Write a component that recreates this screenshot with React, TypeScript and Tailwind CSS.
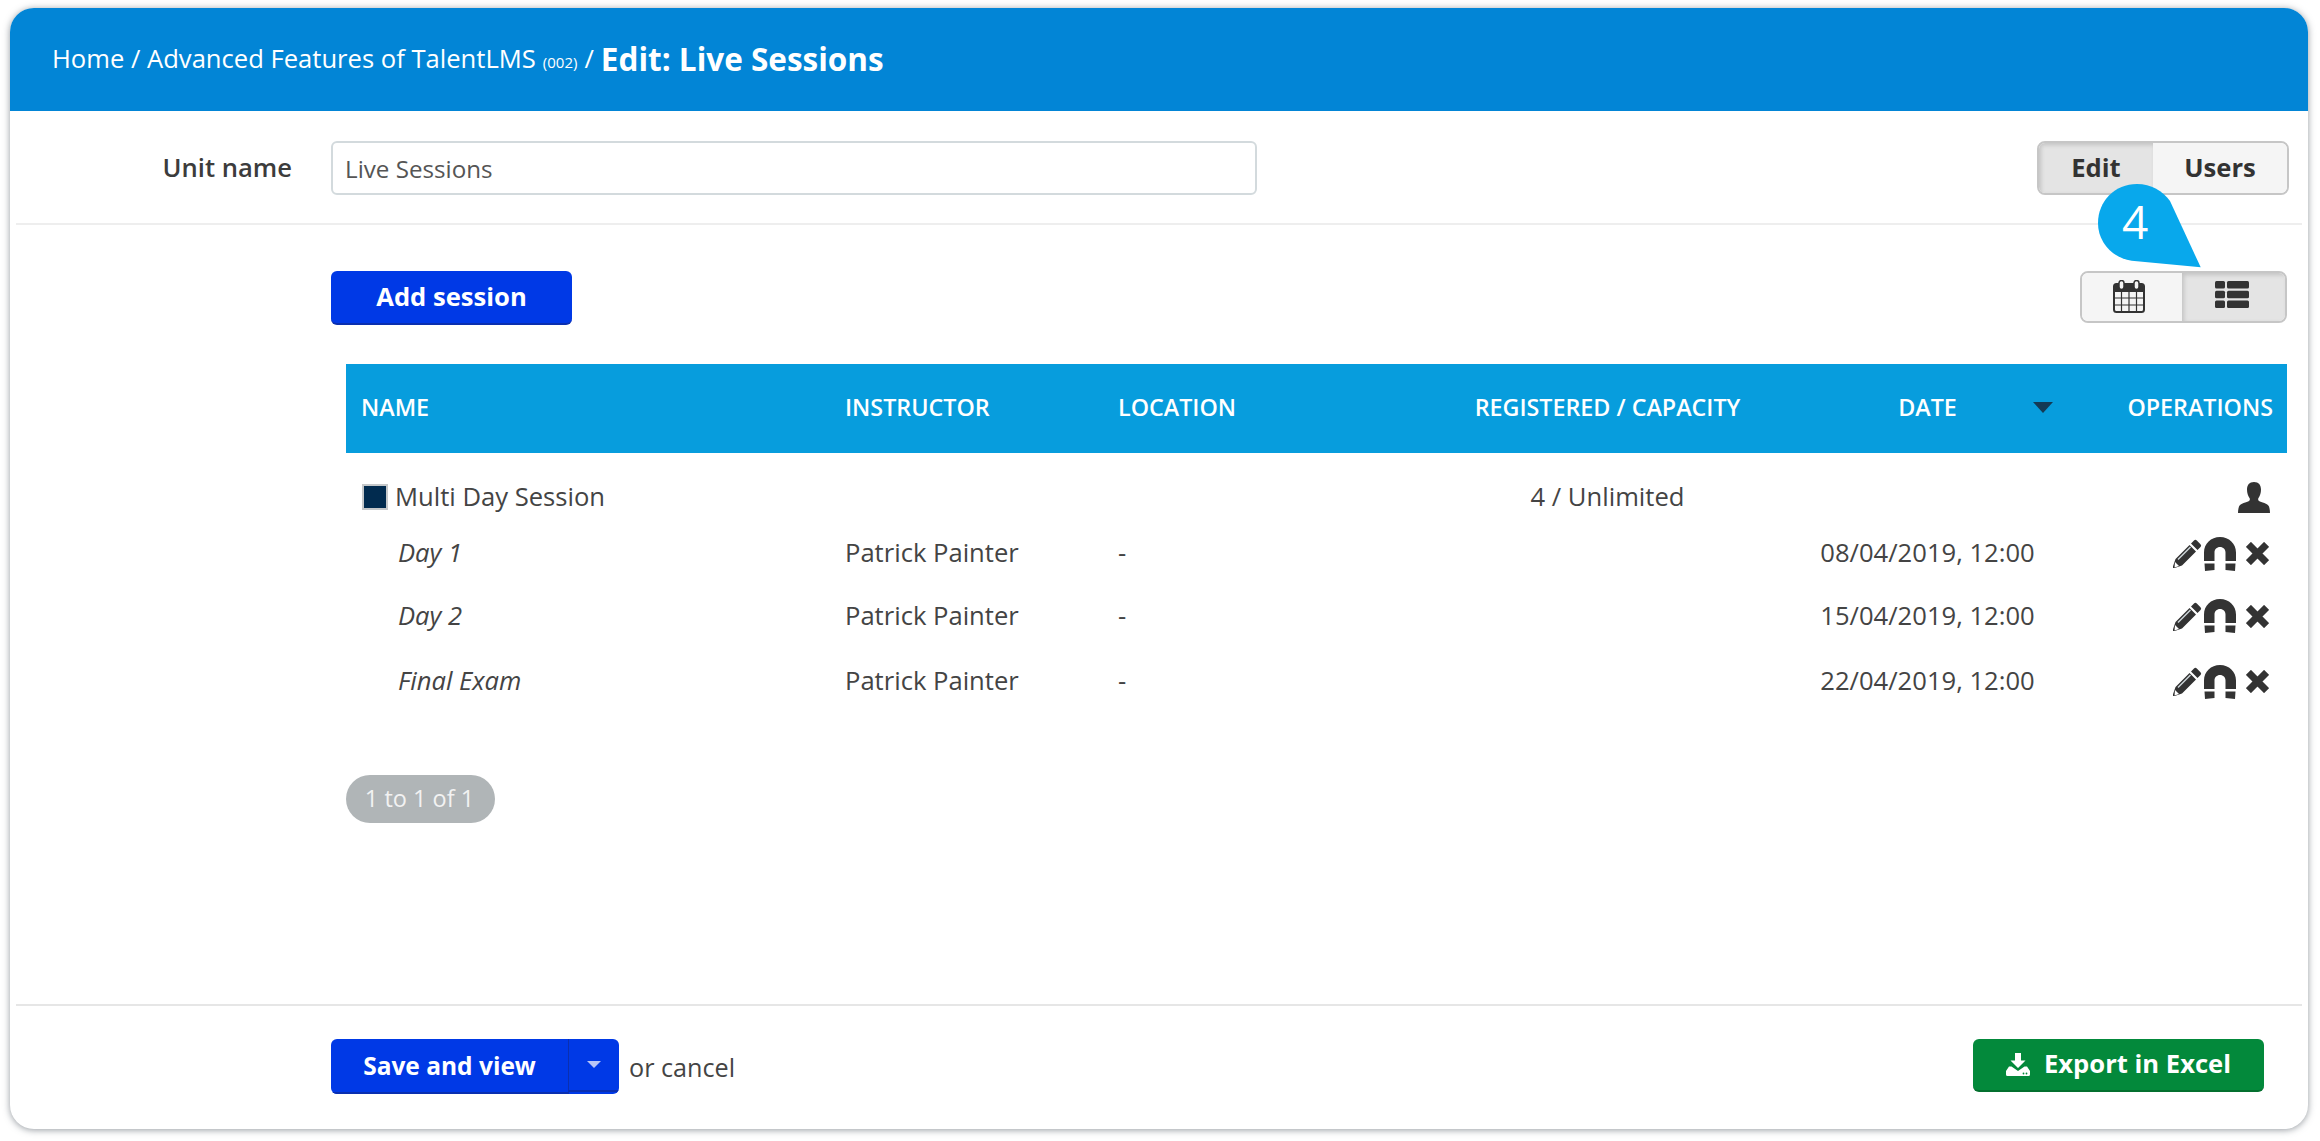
const font = { fontFamily: '"Open Sans", sans-serif' };

function UserIcon() {
  return (
    <svg viewBox="0 0 32 31" className="w-[32px] h-[31px] fill-[#333]">
      <path d="M16 0c4.700 0 7 3 7 7.500 0 3.500-1 6.500-2.500 8.500-.6.800-.5 2.500.5 3 2 1 9 2.700 10 5.500.7 2 1 4.500 1 6.500H0c0-2 .3-4.500 1-6.500 1-2.800 8-4.500 10-5.500 1-.5 1.100-2.200.5-3C10 14 9 11 9 7.500 9 3 11.300 0 16 0z" />
    </svg>
  );
}

function PencilIcon() {
  return (
    <svg viewBox="0 0 29 29" className="w-[29px] h-[29px]">
      <path d="M21 1.500a2 2 0 0 1 2.800 0l3.700 3.700a2 2 0 0 1 0 2.800l-3 3-6.500-6.500zM16.500 6l6.500 6.500L9 26.500 1.700 29H0v-1.700L2.500 20z" fill="#333" />
      <path d="M5 20.500 17.500 8" stroke="#cfd6da" strokeWidth="1.500" />
      <path d="M2 23l4 4-4.500 1.500z" fill="#fff" />
    </svg>
  );
}

function MagnetIcon() {
  return (
    <svg viewBox="0 0 32 34" className="w-[32px] h-[34px] fill-[#333]">
      <path d="M16 0C7 0 0 6.500 0 15.500V24h10.500v-8.500c0-3.200 2.300-5.500 5.500-5.500s5.500 2.300 5.500 5.500V24H32v-8.500C32 6.500 25 0 16 0z" />
      <path d="M.5 26.500h10v6.500L1 34zM21.500 26.500h10L31 34l-9.500-1z" />
    </svg>
  );
}

function CrossIcon() {
  return (
    <svg viewBox="0 0 24 24" className="w-[23px] h-[23px] stroke-[#333]" strokeWidth="7.500">
      <path d="M2.500 2.500l19 19M21.500 2.500l-19 19" />
    </svg>
  );
}

function CalendarIcon() {
  return (
    <svg viewBox="0 0 32 33" className="w-[32px] h-[33px]">
      <rect x="1" y="4" width="30" height="28" rx="2.500" fill="none" stroke="#333" strokeWidth="2" />
      <rect x="1" y="4" width="30" height="8" fill="#333" />
      <path d="M1 18h30M1 25h30M8.500 12v20M16 12v20M23.500 12v20" stroke="#333" strokeWidth="1.200" />
      <rect x="6" y="0.500" width="5" height="9" rx="2.500" fill="#f5f5f5" stroke="#333" strokeWidth="1.500" />
      <rect x="21" y="0.500" width="5" height="9" rx="2.500" fill="#f5f5f5" stroke="#333" strokeWidth="1.500" />
    </svg>
  );
}

function ListIcon() {
  return (
    <svg viewBox="0 0 34 27" className="w-[34px] h-[27px] fill-[#333]">
      <rect x="0" y="0" width="10" height="7.500" rx="1.500" />
      <rect x="12" y="0" width="22" height="7.500" rx="1.500" />
      <rect x="0" y="9.700" width="10" height="7.500" rx="1.500" />
      <rect x="12" y="9.700" width="22" height="7.500" rx="1.500" />
      <rect x="0" y="19.500" width="10" height="7.500" rx="1.500" />
      <rect x="12" y="19.500" width="22" height="7.500" rx="1.500" />
    </svg>
  );
}

function DownloadIcon() {
  return (
    <svg viewBox="0 0 24 23" className="w-[24px] h-[23px] fill-white">
      <path d="M9 0h6v7.500h4.500L12 15 4.500 7.500H9z" />
      <path d="M3 13.500h2.500L12 18l6.500-4.500H21l3 4.500v3.500a1.500 1.500 0 0 1-1.500 1.500h-21A1.500 1.500 0 0 1 0 21.500V18z" />
      <circle cx="17.500" cy="20.500" r="0.900" fill="#03893b" />
      <circle cx="20.500" cy="20.500" r="0.900" fill="#03893b" />
    </svg>
  );
}

const days = [
  { name: "Day 1", date: "08/04/2019, 12:00", h: "h-[59px]" },
  { name: "Day 2", date: "15/04/2019, 12:00", h: "h-[66px]" },
  { name: "Final Exam", date: "22/04/2019, 12:00", h: "h-[65px]" },
];

const cols = "grid grid-cols-[483px_273px_358px_295px_345px_187px] items-center";

export default function App() {
  return (
    <div className="w-[2320px] h-[1141px] bg-white pl-[10px] pt-[8px] overflow-hidden" style={font}>
      <div className="relative w-[2298px] h-[1121px] rounded-[24px] bg-white overflow-hidden flex flex-col text-[#444] text-[25.6px] shadow-[0_1px_7px_rgba(60,70,80,0.55)]">
        <div className="h-[103px] shrink-0 bg-[#0285d6] text-white flex items-center pl-[42px]">
          <span>Home / Advanced Features of TalentLMS</span>
          <span className="text-[15px] ml-[7px] mt-[6px]">(002)</span>
          <span className="ml-[7px]">/</span>
          <span className="ml-[7px] font-bold text-[31.500px] -mt-[2px]">Edit: Live Sessions</span>
        </div>

        <div className="h-[114px] shrink-0 mx-[6px] border-b-2 border-[#eeeeee] flex items-start pt-[30px]">
          <div className="w-[276px] text-right font-semibold text-[#3c3c3c] h-[54px] leading-[54px]">Unit name</div>
          <div className="ml-[39px] w-[926px] h-[54px] rounded-[6px] border-2 border-[#d3dadd] bg-white pl-[12px] leading-[52px] text-[#555] text-[24.2px]">
            Live Sessions
          </div>
          <div className="ml-auto mr-[13px] flex h-[54px] w-[252px] rounded-[8px] border-2 border-[#c6c6c6] overflow-hidden font-bold text-[#333]">
            <div className="w-[114px] bg-[#e4e4e4] shadow-[inset_2px_2px_4px_rgba(0,0,0,0.15)] flex items-center justify-center pt-[1px]">Edit</div>
            <div className="flex-1 bg-[#f5f5f5] flex items-center justify-center pt-[1px]">Users</div>
          </div>
        </div>

        <div className="flex-1 flex flex-col pl-[321px] pr-[21px] min-h-0">
          <div className="flex items-center justify-between mt-[46px] h-[54px]">
            <button className="w-[241px] h-[54px] rounded-[6px] bg-[#0039e6] text-white font-bold border-b-2 border-[#0a2fb0] pt-[1px]">
              Add session
            </button>
            <div className="flex w-[207px] h-[52px] rounded-[8px] border-2 border-[#c6c6c6] overflow-hidden -mt-[2px]">
              <div className="w-[100px] bg-[#f5f5f5] flex items-center justify-center pr-[7px] pb-[2px]"><CalendarIcon /></div>
              <div className="flex-1 bg-[#e4e4e4] shadow-[inset_2px_2px_4px_rgba(0,0,0,0.15)] flex items-center justify-center pb-[6px] pr-[4px]"><ListIcon /></div>
            </div>
          </div>

          <div className="ml-[15px] mt-[39px]">
            <div className={`${cols} h-[89px] bg-[#079ddd] text-white font-semibold text-[23.300px] pb-[2px]`}>
              <div className="pl-[15px]">NAME</div>
              <div className="pl-[16px]">INSTRUCTOR</div>
              <div className="pl-[16px]">LOCATION</div>
              <div className="text-center">REGISTERED / CAPACITY</div>
              <div className="relative text-center">
                DATE
                <span className="absolute left-[278px] top-[12px] w-0 h-0 border-x-[10px] border-x-transparent border-t-[11px] border-t-[#143a55]" />
              </div>
              <div className="text-right pr-[14px]">OPERATIONS</div>
            </div>

            <div className={`${cols} h-[71px] pt-[17px]`}>
              <div className="pl-[16px] flex items-center">
                <span className="w-[26px] h-[26px] bg-[#012b4f] border-2 border-[#c5c8ca] mr-[7px]" />
                Multi Day Session
              </div>
              <div />
              <div />
              <div className="text-center">4 / Unlimited</div>
              <div />
              <div className="flex justify-end pr-[17px]"><UserIcon /></div>
            </div>

            {days.map((d) => (
              <div key={d.name} className={`${cols} ${d.h}`}>
                <div className="pl-[52px] italic">{d.name}</div>
                <div className="pl-[16px]">Patrick Painter</div>
                <div className="pl-[16px]">-</div>
                <div />
                <div className="text-center">{d.date}</div>
                <div className="flex items-center justify-end pr-[18px]">
                  <PencilIcon />
                  <span className="ml-[2px]"><MagnetIcon /></span>
                  <span className="ml-[10px]"><CrossIcon /></span>
                </div>
              </div>
            ))}

            <div className="mt-[61px] w-[149px] h-[48px] rounded-full bg-[#b0b5b7] text-[#f2f2f2] flex items-center justify-center text-[23.500px] pr-[2px]">
              1 to 1 of 1
            </div>
          </div>
        </div>

        <div className="h-[125px] shrink-0 mx-[6px] border-t-2 border-[#e6e6e6] flex items-start pt-[33px] pl-[315px] pr-[38px]">
          <div className="flex h-[55px] rounded-[6px] bg-[#0039e6] text-white font-bold text-[24.500px] overflow-hidden">
            <div className="w-[238px] flex items-center justify-center border-r border-[#0a2fb0] border-b-2 border-b-[#0a2fb0] pt-[1px]">Save and view</div>
            <div className="w-[50px] h-[53px] flex items-center justify-center border-b-2 border-[#0a2fb0]">
              <span className="w-0 h-0 border-x-[7px] border-x-transparent border-t-[7px] border-t-[#b8c6f7]" />
            </div>
          </div>
          <span className="ml-[10px] h-[55px] leading-[57px] text-[25.2px]">or cancel</span>
          <button className="ml-auto w-[291px] h-[53px] rounded-[6px] bg-[#03893b] text-white font-bold flex items-center justify-center gap-[14px] border-b-2 border-[#04702f]">
            <DownloadIcon />
            Export in Excel
          </button>
        </div>

        <div className="absolute left-[2088px] top-[176px]">
          <svg viewBox="0 0 103 84" className="w-[103px] h-[84px] fill-[#08a8ec]">
            <path d="M72 17 102.700 83.300 33.700 76.700C14 74 0 58 0 39 0 17 17 0 39 0 53 0 65 7 72 17z" />
          </svg>
          <span className="absolute left-[24px] top-[7px] text-white text-[46px] leading-[60px]">4</span>
        </div>
      </div>
    </div>
  );
}
